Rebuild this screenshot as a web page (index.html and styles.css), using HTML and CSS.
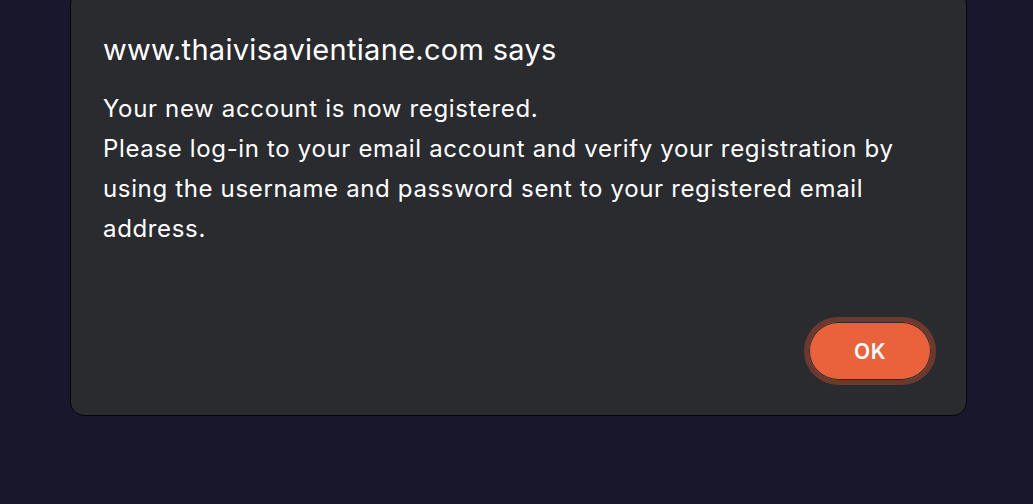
FILE: index.html
```html
<!DOCTYPE html>
<html>
<head>
<meta charset="utf-8">
<link rel="stylesheet" href="styles.css">
</head>
<body>
<div class="dialog">
  <div class="title">www.thaivisavientiane.com says</div>
  <div class="message">Your new account is now registered.<br>Please log-in to your email account and verify your registration by using the username and password sent to your registered email address.</div>
  <div class="actions">
    <button class="ok">OK</button>
  </div>
</div>
</body>
</html>
```

FILE: styles.css
```css
html, body {
  margin: 0;
  padding: 0;
  height: 100%;
  background: #18172c;
}
body {
  font-family: Inter, "Noto Sans", sans-serif;
  color: #ffffff;
  overflow: hidden;
}
.dialog {
  box-sizing: border-box;
  width: 897px;
  height: 426px;
  margin: -10px 0 0 70px;
  background: #2a2b2f;
  border: 1px solid #050507;
  border-radius: 14px;
  padding: 41px 32px 0 32px;
  display: flex;
  flex-direction: column;
}
.title {
  font-size: 29px;
  line-height: 36px;
  letter-spacing: 0.3px;
}
.message {
  margin-top: 21px;
  font-size: 24px;
  line-height: 40px;
  letter-spacing: 0.65px;
  width: 830px;
}
.actions {
  display: flex;
  justify-content: flex-end;
  margin-top: 68px;
}
.ok {
  box-sizing: border-box;
  width: 132px;
  height: 68px;
  border-radius: 34px;
  border: 5px solid #6a3a2e;
  background: #e9623c;
  box-shadow: inset 0 0 0 1px #2a2b2f;
  color: #ffffff;
  font-family: Inter, "Noto Sans", sans-serif;
  font-size: 21px;
  font-weight: 600;
  letter-spacing: 0.5px;
  margin-right: -2px;
}
```
